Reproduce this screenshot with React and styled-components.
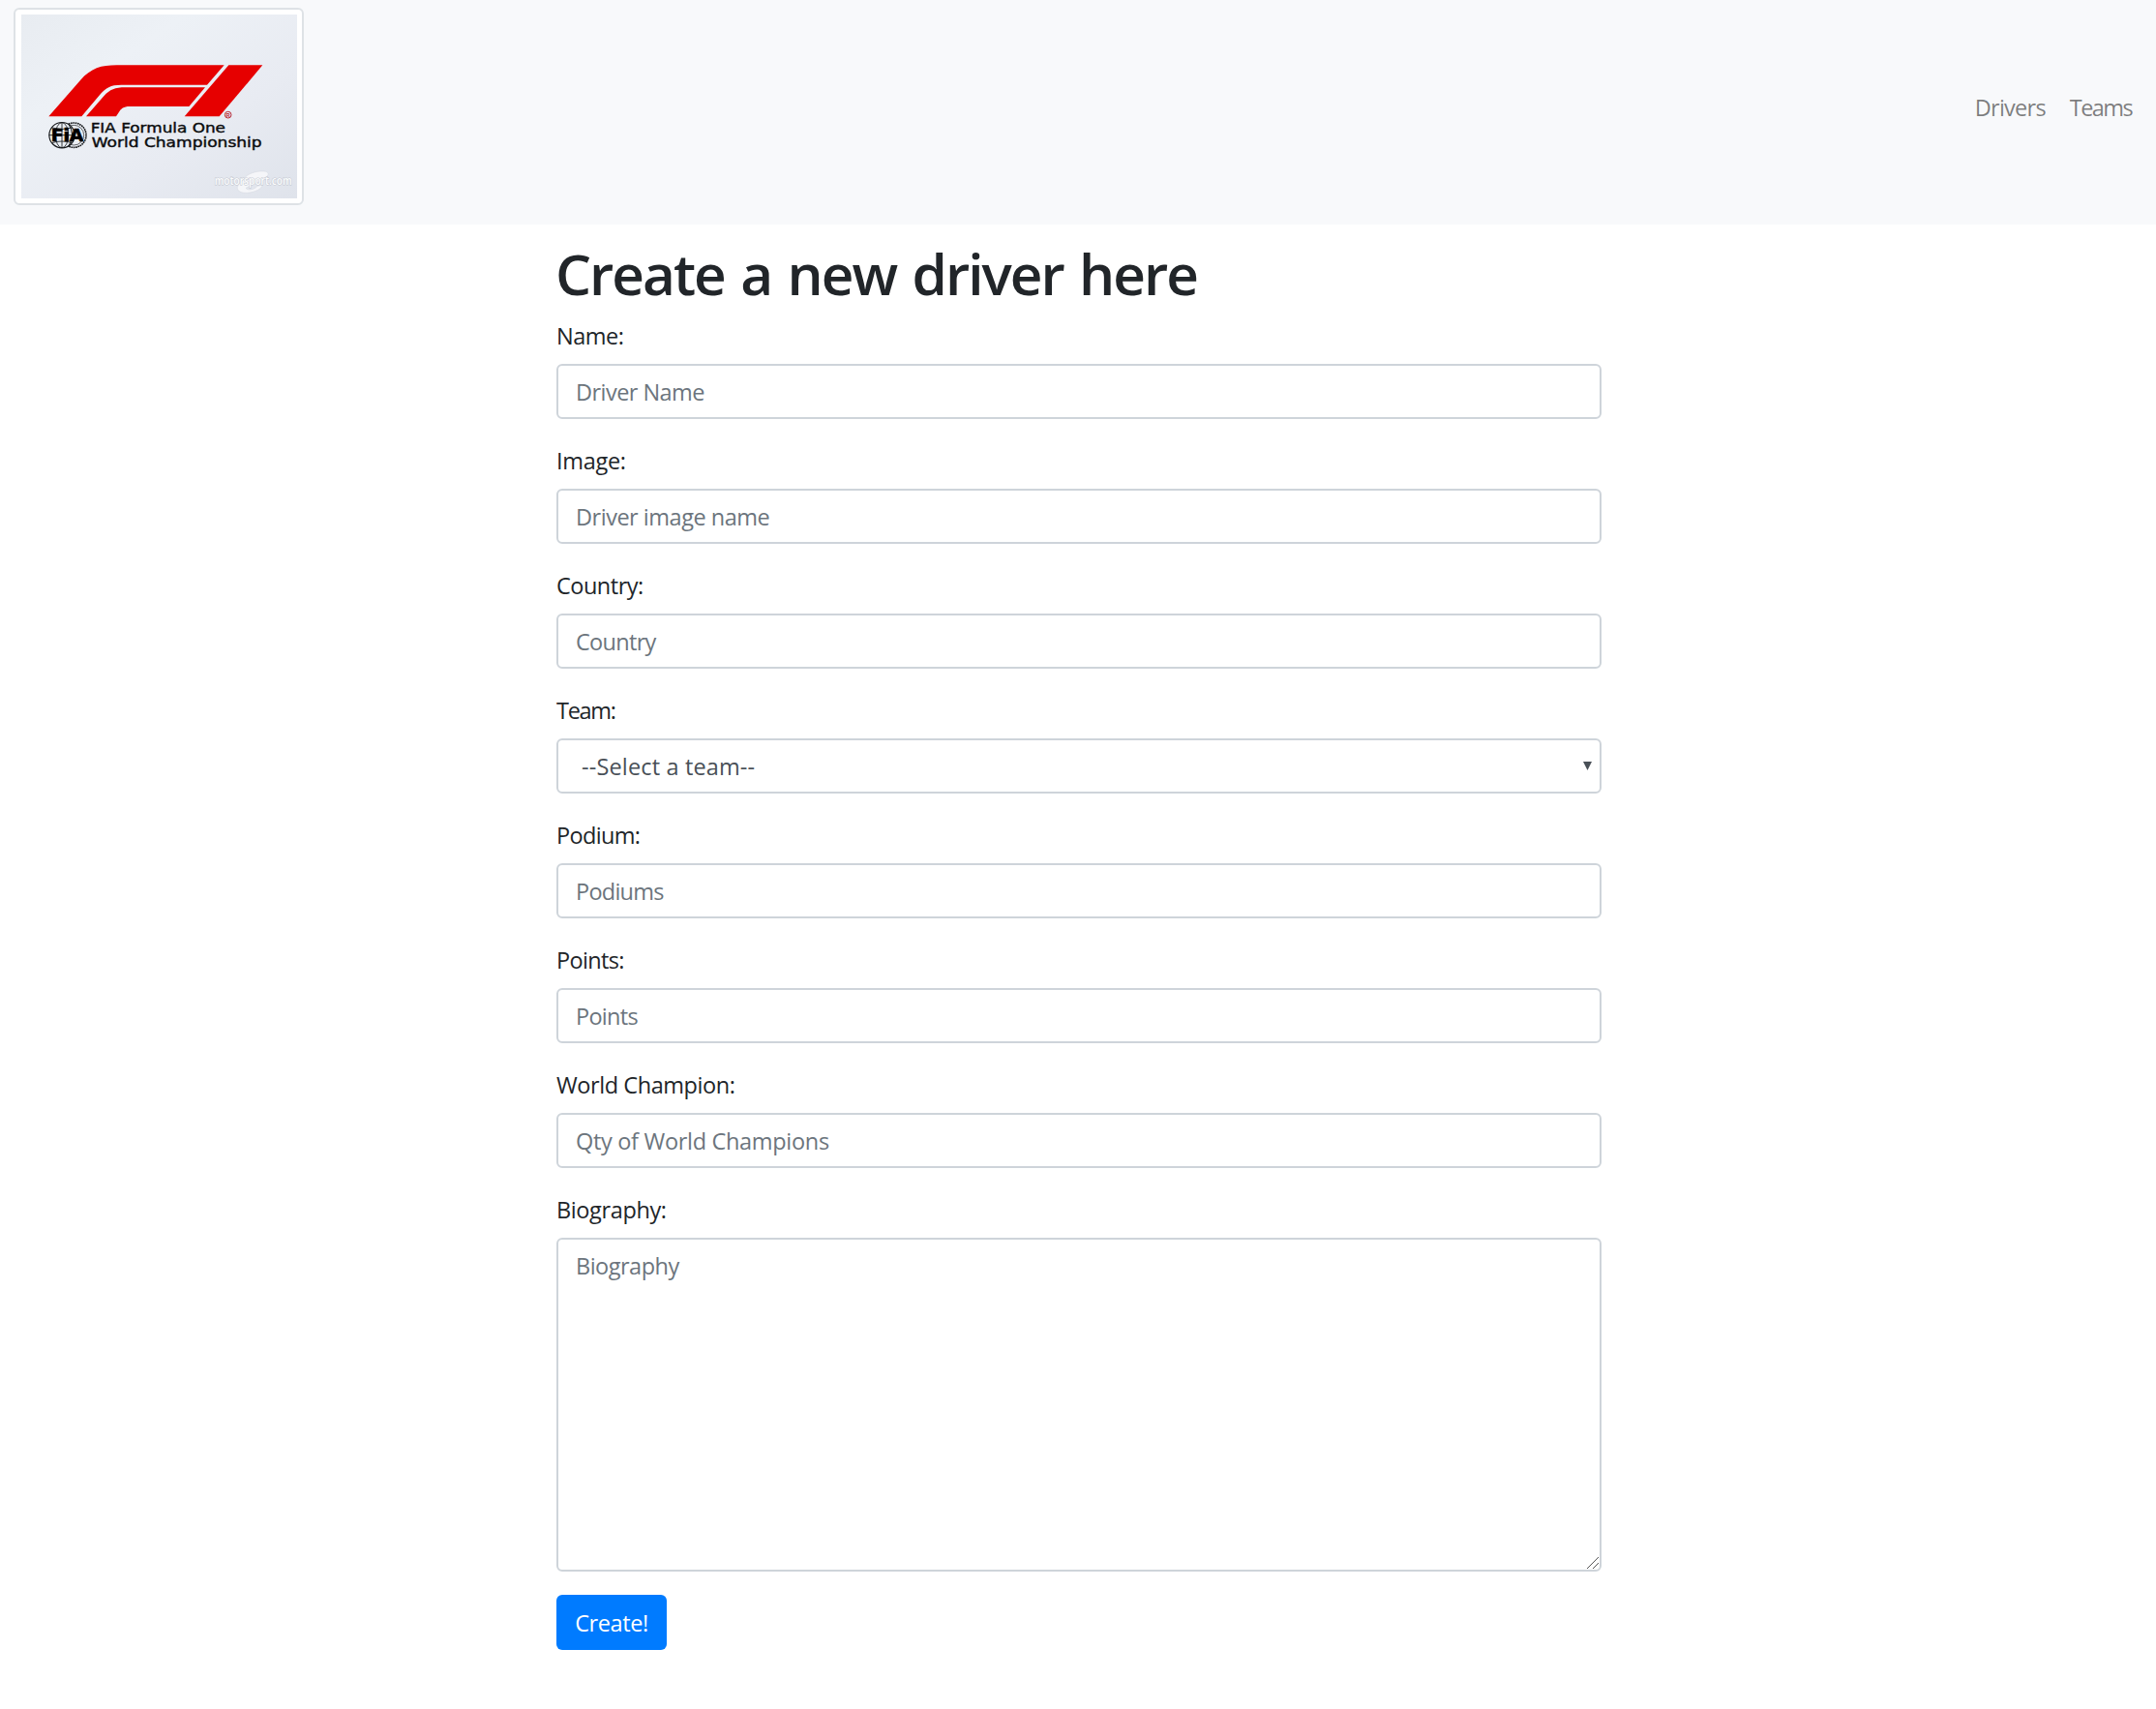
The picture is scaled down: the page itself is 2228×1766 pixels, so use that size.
import React from "react";
import styled, { createGlobalStyle } from "styled-components";

const GlobalStyle = createGlobalStyle`
  *, *::before, *::after { box-sizing: border-box; }
  body {
    margin: 0;
    background: #fff;
    color: #212529;
    font: 400 23.5px/36px "Open Sans", "Noto Sans", sans-serif;
  }
`;

const Navbar = styled.nav`
  display: flex;
  align-items: center;
  justify-content: space-between;
  height: 232px;
  padding: 8px 25px 20px 14px;
  background: #f8f9fb;
`;

const Thumbnail = styled.a`
  display: block;
  width: 300px;
  height: 204px;
  padding: 5px 5px 5px 6px;
  border: 2px solid #dee2e6;
  border-radius: 6px;
  background: #fff;

  svg {
    display: block;
    width: 285px;
    height: 190px;
  }
`;

const NavLinks = styled.div`
  display: flex;
  gap: 25px;
  padding-top: 1px;
`;

const NavLink = styled.a`
  color: rgba(0, 0, 0, 0.5);
  letter-spacing: ${(p) => p.$track}px;
  text-decoration: none;
`;

const Form = styled.form`
  width: 1080px;
  margin: 12px 0 0 575px;
`;

const Title = styled.h1`
  height: 72px;
  margin: 0 0 12px -1px;
  padding-top: 2px;
  font-size: 58.5px;
  font-weight: 600;
  line-height: 72px;
  letter-spacing: -2px;
  word-spacing: 3.2px;
  white-space: nowrap;
`;

const Field = styled.div`
  display: flex;
  flex-direction: column;
  margin-bottom: 24px;
`;

const Label = styled.label`
  height: 36px;
  margin-bottom: 12px;
  padding-top: 1px;
  letter-spacing: ${(p) => p.$track}px;
`;

const Input = styled.input`
  width: 100%;
  height: 57px;
  padding: 1px 17px 0 18px;
  border: 2px solid #ced4da;
  border-radius: 6px;
  outline: none;
  background: #fff;
  color: #495057;
  font: inherit;
  letter-spacing: ${(p) => p.$track}px;

  &::placeholder { color: #6c757d; opacity: 1; }
`;

const TextArea = styled(Input).attrs({ as: "textarea" })`
  display: block;
  height: 345px;
  padding: 9px 17px 9px 18px;
  resize: none;
`;

const ControlBox = styled.div`
  position: relative;
`;

const Select = styled.select`
  display: block;
  width: 100%;
  height: 57px;
  padding: 1px 40px 0 24px;
  border: 2px solid #ced4da;
  border-radius: 6px;
  appearance: none;
  background: #fff;
  color: #495057;
  font: inherit;
  letter-spacing: 0.15px;
`;

const Arrow = styled.svg`
  position: absolute;
  top: 24px;
  right: 10px;
  width: 9px;
  height: 9px;
`;

const Grip = styled.svg`
  position: absolute;
  right: 3px;
  bottom: 3px;
  width: 12px;
  height: 12px;
`;

const Submit = styled.button`
  display: block;
  width: 114px;
  height: 57px;
  padding: 1px 0 0;
  border: 0;
  border-radius: 6px;
  background: #007bff;
  color: #fff;
  font: inherit;
  letter-spacing: -0.4px;
`;

function Logo() {
  return (
    <svg viewBox="66 45 855 570" preserveAspectRatio="none" aria-label="FIA Formula One World Championship">
      <defs>
        <linearGradient id="paper" x1="0" y1="0" x2="1" y2="1">
          <stop offset="0" stopColor="#e8ecf1" />
          <stop offset="0.3" stopColor="#edf1f6" />
          <stop offset="0.65" stopColor="#e8ebf2" />
          <stop offset="1" stopColor="#dfe3eb" />
        </linearGradient>
      </defs>
      <rect x="66" y="45" width="855" height="570" fill="url(#paper)" />
      <g fill="#e60000">
        <path d="M151 361 L249 249 C282 211 314 202 362 202 H695 L642 263 H376 C342 263 329 272 310 293 L253 361 Z" />
        <path d="M267 361 L322 298 C341 277 357 271 388 271 H636 L586 330 H402 C382 330 376 337 369 347 L360 361 Z" />
        <path d="M572 361 L709 202 H814 L680 361 Z" />
      </g>
      <circle cx="707" cy="356" r="10" fill="none" stroke="#b8262f" strokeWidth="3" />
      <text x="707" y="362" textAnchor="middle" fill="#b8262f" fontFamily="Liberation Sans" fontWeight="700" fontSize="17">R</text>

      <g fill="none" stroke="#16181b">
        <circle cx="229" cy="419" r="38" strokeWidth="5" strokeDasharray="5 2" />
        <circle cx="229" cy="419" r="31" strokeWidth="2" />
        <circle cx="192" cy="419" r="39.5" strokeWidth="3.5" fill="#e9edf2" />
        <path d="M192 379 V459 M152 419 H232 M160 396 Q192 405 224 396 M160 443 Q192 433 224 443" strokeWidth="2.5" />
        <ellipse cx="192" cy="419" rx="20" ry="39" strokeWidth="2.5" />
        <path d="M212 384 Q236 419 212 454" strokeWidth="3" />
      </g>
      <text x="158" y="439" textLength="101" lengthAdjust="spacingAndGlyphs" fill="#000" stroke="#000" strokeWidth="2" fontFamily="DejaVu Sans" fontWeight="700" fontSize="52">FiA</text>

      <g fill="#0b0c0e" stroke="#0b0c0e" strokeWidth="1.2" fontFamily="DejaVu Sans">
        <text x="281" y="411" fontSize="42" textLength="418" lengthAdjust="spacingAndGlyphs">FIA Formula One</text>
        <text x="284" y="455" fontSize="42" textLength="528" lengthAdjust="spacingAndGlyphs">World Championship</text>
      </g>

      <g fill="#f5f6f9" stroke="#d3d7de" strokeWidth="1.5">
        <path d="M756 556 C764 538 797 529 819 531 C840 533 832 550 813 557 C800 567 778 574 762 583 C768 592 789 588 798 577 L814 574 C811 585 791 596 767 598 C747 599 734 592 736 580 C738 570 748 563 756 556 Z" />
      </g>
      <text x="665" y="574" textLength="240" lengthAdjust="spacingAndGlyphs" fontFamily="Open Sans" fontWeight="600" fontSize="36" fill="#fbfcfd" stroke="#bfc4cd" strokeWidth="3" paintOrder="stroke">motorsport.com</text>
    </svg>
  );
}

function TextField({ label, track, placeholder, placeholderTrack }) {
  return (
    <Field>
      <Label $track={track}>{label}</Label>
      <Input $track={placeholderTrack} placeholder={placeholder} />
    </Field>
  );
}

export default function App() {
  return (
    <>
      <GlobalStyle />
      <Navbar>
        <Thumbnail><Logo /></Thumbnail>
        <NavLinks>
          <NavLink $track={-0.75}>Drivers</NavLink>
          <NavLink $track={-1.6}>Teams</NavLink>
        </NavLinks>
      </Navbar>
      <Form onSubmit={(e) => e.preventDefault()}>
        <Title>Create a new driver here</Title>
        <TextField label="Name:" track={-0.5} placeholder="Driver Name" placeholderTrack={-0.55} />
        <TextField label="Image:" track={-0.3} placeholder="Driver image name" placeholderTrack={-0.48} />
        <TextField label="Country:" track={-0.5} placeholder="Country" placeholderTrack={-0.7} />
        <Field>
          <Label $track={-1.3}>Team:</Label>
          <ControlBox>
            <Select defaultValue="">
              <option value="">--Select a team--</option>
            </Select>
            <Arrow viewBox="0 0 9 9"><path d="M0 0H9L4.5 9Z" fill="#495057" /></Arrow>
          </ControlBox>
        </Field>
        <TextField label="Podium:" track={-0.65} placeholder="Podiums" placeholderTrack={-0.75} />
        <TextField label="Points:" track={-0.65} placeholder="Points" placeholderTrack={-0.7} />
        <TextField label="World Champion:" track={-0.43} placeholder="Qty of World Champions" placeholderTrack={-0.31} />
        <Field>
          <Label $track={-0.38}>Biography:</Label>
          <ControlBox>
            <TextArea $track={-0.5} placeholder="Biography" />
            <Grip viewBox="0 0 12 12"><path d="M0 12L12 0M6 12L12 6" stroke="#555" strokeWidth="1" fill="none" /></Grip>
          </ControlBox>
        </Field>
        <Submit type="submit">Create!</Submit>
      </Form>
    </>
  );
}
